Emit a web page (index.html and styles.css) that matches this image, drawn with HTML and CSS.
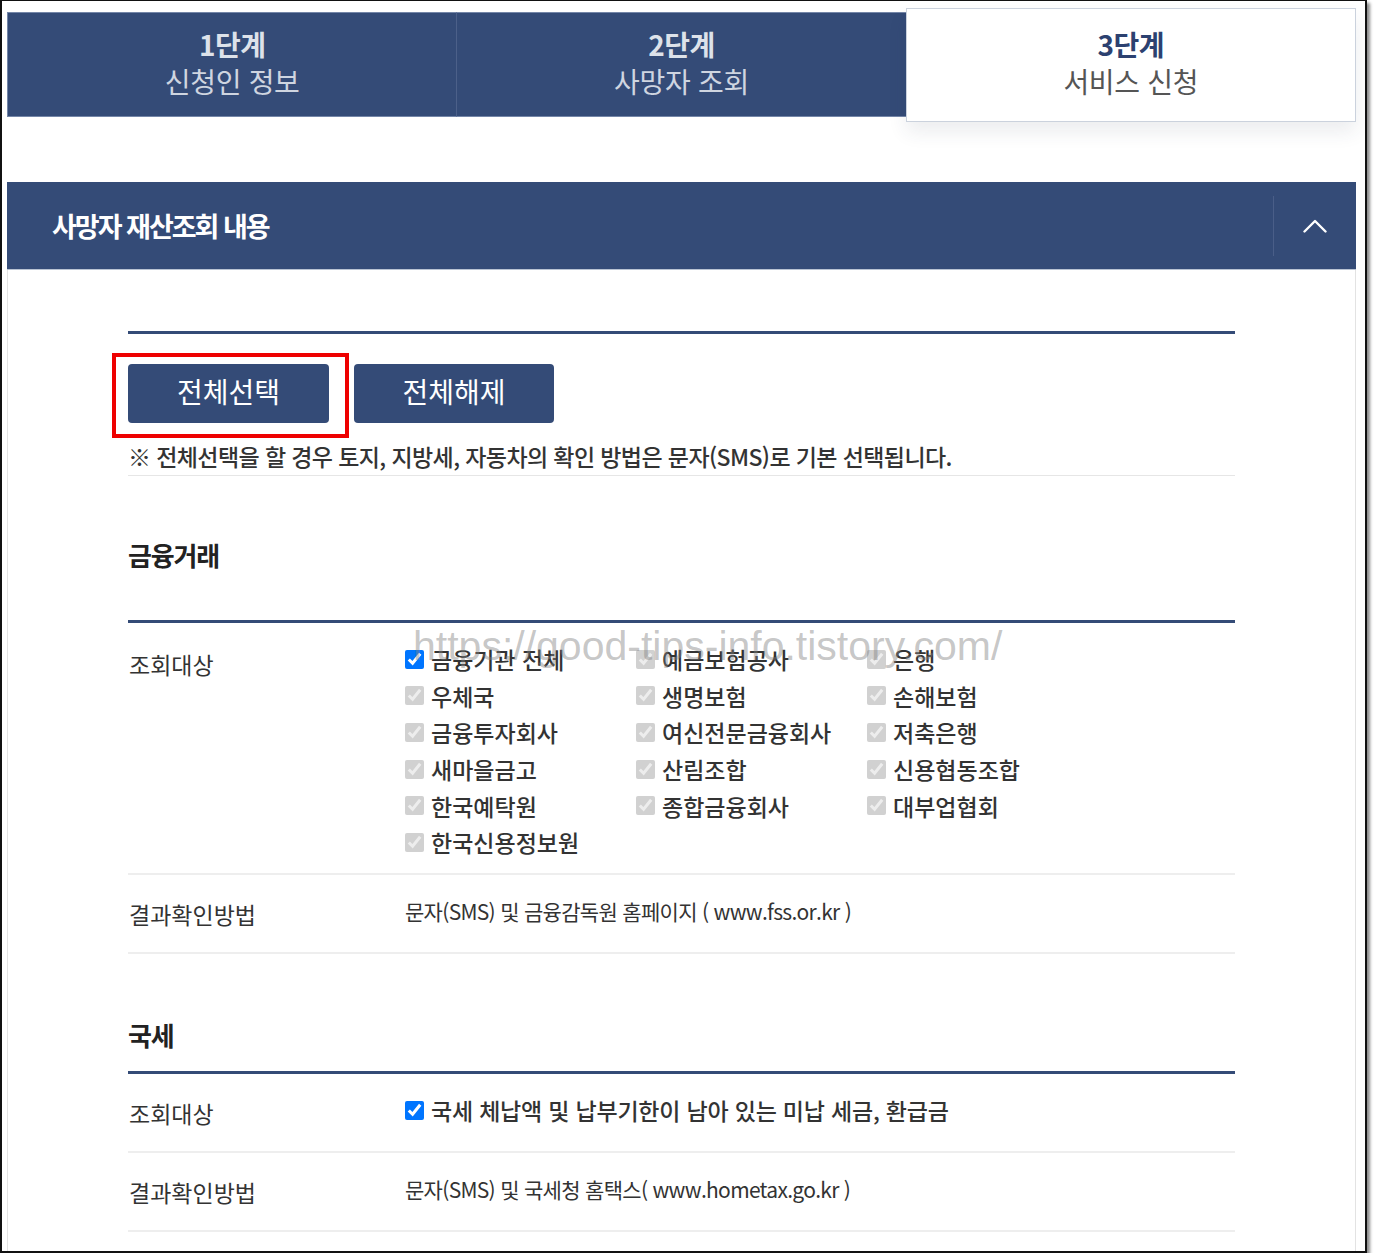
FILE: index.html
```html
<!DOCTYPE html>
<html lang="ko">
<head>
<meta charset="utf-8">
<title>서비스 신청</title>
<link rel="stylesheet" href="styles.css">
</head>
<body>
<div class="frame">
  <div class="tabs">
    <div class="tab"><span class="step">1단계</span><span class="name">신청인 정보</span></div>
    <div class="tab"><span class="step">2단계</span><span class="name">사망자 조회</span></div>
    <div class="tab active"><span class="step">3단계</span><span class="name">서비스 신청</span></div>
  </div>

  <section class="panel">
    <div class="panel-head">
      <h2>사망자 재산조회 내용</h2>
      <button class="toggle" type="button" aria-label="접기">
        <svg width="24" height="14" viewBox="0 0 24 14"><polyline points="1.5,12.5 12,2 22.5,12.5" fill="none" stroke="#fff" stroke-width="2.4" stroke-linecap="round" stroke-linejoin="round"/></svg>
      </button>
    </div>
    <div class="panel-body">
      <div class="inner">
        <div class="btns">
          <button class="btn btn-first" type="button">전체선택</button>
          <button class="btn btn-second" type="button">전체해제</button>
          <span class="highlight"></span>
        </div>
        <p class="note">※ 전체선택을 할 경우 토지, 지방세, 자동차의 확인 방법은 문자(SMS)로 기본 선택됩니다.</p>

        <h3 class="sec-title">금융거래</h3>
        <div class="table">
          <div class="row row-big">
            <div class="label label-big">조회대상</div>
            <div class="checks">
              <label class="chk"><input type="checkbox" checked><span>금융기관 전체</span></label>
              <label class="chk"><input type="checkbox" checked disabled><span>예금보험공사</span></label>
              <label class="chk"><input type="checkbox" checked disabled><span>은행</span></label>
              <label class="chk"><input type="checkbox" checked disabled><span>우체국</span></label>
              <label class="chk"><input type="checkbox" checked disabled><span>생명보험</span></label>
              <label class="chk"><input type="checkbox" checked disabled><span>손해보험</span></label>
              <label class="chk"><input type="checkbox" checked disabled><span>금융투자회사</span></label>
              <label class="chk"><input type="checkbox" checked disabled><span>여신전문금융회사</span></label>
              <label class="chk"><input type="checkbox" checked disabled><span>저축은행</span></label>
              <label class="chk"><input type="checkbox" checked disabled><span>새마을금고</span></label>
              <label class="chk"><input type="checkbox" checked disabled><span>산림조합</span></label>
              <label class="chk"><input type="checkbox" checked disabled><span>신용협동조합</span></label>
              <label class="chk"><input type="checkbox" checked disabled><span>한국예탁원</span></label>
              <label class="chk"><input type="checkbox" checked disabled><span>종합금융회사</span></label>
              <label class="chk"><input type="checkbox" checked disabled><span>대부업협회</span></label>
              <label class="chk"><input type="checkbox" checked disabled><span>한국신용정보원</span></label>
            </div>
          </div>
          <div class="row">
            <div class="label">결과확인방법</div>
            <div class="val">문자(SMS) 및 금융감독원 홈페이지 ( www.fss.or.kr )</div>
          </div>
        </div>

        <h3 class="sec-title sec-tax">국세</h3>
        <div class="table">
          <div class="row">
            <div class="label">조회대상</div>
            <div class="single"><label class="chk"><input type="checkbox" checked><span>국세 체납액 및 납부기한이 남아 있는 미납 세금, 환급금</span></label></div>
          </div>
          <div class="row">
            <div class="label">결과확인방법</div>
            <div class="val">문자(SMS) 및 국세청 홈택스( www.hometax.go.kr )</div>
          </div>
        </div>
      </div>
    </div>
  </section>

  <div class="watermark">https://good-tips-info.tistory.com/</div>
</div>
</body>
</html>
```

FILE: styles.css
```css
* { box-sizing: border-box; }

body {
  margin: 0;
  background: #fff;
  font-family: "Noto Sans CJK KR", "Noto Sans", sans-serif;
  color: #333;
}

.frame {
  position: relative;
  width: 1367px;
  height: 1253px;
  border: 2px solid #111;
  border-top-width: 1px;
  box-shadow: 3px 3px 3px rgba(0, 0, 0, 0.45);
  padding: 11px 9px 0 5px;
  overflow: hidden;
}

/* ---------- step tabs ---------- */
.tabs {
  display: flex;
  height: 105px;
}

.tab {
  flex: 1;
  display: flex;
  flex-direction: column;
  align-items: center;
  justify-content: center;
  padding-bottom: 4px;
  background: #344b77;
  color: #cfd5e0;
  border-top: 1px solid #7486a8;
  border-bottom: 1px solid #7486a8;
}

.tab:first-child { border-left: 1px solid #7486a8; }
.tab + .tab { border-left: 1px solid #4c6089; }

.tab .step {
  font-size: 28px;
  font-weight: 700;
  line-height: 37px;
  letter-spacing: -0.5px;
  color: #dde2ea;
}

.tab .name {
  font-size: 28px;
  line-height: 37px;
  letter-spacing: -0.3px;
}

.tab.active {
  background: #fff;
  color: #555;
  border: 1px solid #cbd2dd;
  margin: -4px 0 -5px;
  box-shadow: 0 10px 18px rgba(40, 50, 80, 0.09);
}

.tab.active .step { color: #2c4170; }

/* ---------- panel ---------- */
.panel { margin-top: 65px; }

.panel-head {
  display: flex;
  align-items: center;
  height: 88px;
  background: #344b77;
  padding-left: 45px;
  border-bottom: 1px solid #b9c3d3;
}

.panel-head h2 {
  flex: 1;
  margin: 0;
  color: #fff;
  font-size: 27px;
  font-weight: 700;
  letter-spacing: -2px;
}

.toggle {
  width: 83px;
  height: 60px;
  padding: 0;
  border: 0;
  border-left: 1px solid #4a5e88;
  background: transparent;
  display: flex;
  align-items: center;
  justify-content: center;
}

.panel-body {
  border-left: 1px solid #e3e3e3;
  border-right: 1px solid #e3e3e3;
  padding: 61px 0 40px 120px;
}

.inner {
  width: 1107px;
  border-top: 3px solid #344b77;
}

/* ---------- buttons ---------- */
.btns {
  position: relative;
  display: flex;
  gap: 25px;
  margin-top: 30px;
}

.btn {
  height: 59px;
  border: 0;
  border-radius: 4px;
  background: #344b77;
  color: #fff;
  font-family: inherit;
  font-size: 28px;
  padding: 0 0 6px;
}

.btn-first { width: 201px; }
.btn-second { width: 200px; }

.highlight {
  position: absolute;
  left: -16px;
  top: -11px;
  width: 237px;
  height: 85px;
  border: 4px solid #ee0000;
}

.note {
  margin: 20px 0 0;
  padding-bottom: 6px;
  font-size: 23px;
  line-height: 26px;
  font-weight: 500;
  letter-spacing: -0.6px;
  color: #333;
  border-bottom: 1px solid #e6e6e6;
}

/* ---------- sections ---------- */
.sec-title {
  margin: 64px 0 50px;
  font-size: 26px;
  line-height: 30px;
  font-weight: 700;
  letter-spacing: -1.2px;
  color: #222;
}

.sec-title.sec-tax { margin: 66px 0 21px; }

.table { border-top: 3px solid #344b77; }

.row {
  display: grid;
  grid-template-columns: 277px 1fr;
  align-items: center;
  height: 79px;
  border-bottom: 2px solid #eeeeee;
}

.row.row-big {
  height: auto;
  align-items: start;
  padding: 18px 0 12px;
}

.label {
  padding-left: 1px;
  font-size: 23px;
  line-height: 30px;
  color: #333;
  margin-top: 2px;
}

.label.label-big { margin-top: 8px; }

.val {
  font-size: 21px;
  line-height: 30px;
  letter-spacing: -0.7px;
  color: #333;
  margin-top: -4px;
}

.checks {
  display: grid;
  grid-template-columns: repeat(3, 231px);
  grid-auto-rows: 36.6px;
}

.chk {
  display: flex;
  align-items: center;
  gap: 7px;
  font-size: 23px;
  line-height: 30px;
  font-weight: 500;
  color: #333;
}

.chk input {
  width: 19px;
  height: 19px;
  margin: 0;
  flex: none;
}

.single .chk { height: 30px; margin-top: -4px; letter-spacing: -0.2px; }

/* ---------- watermark ---------- */
.watermark {
  position: absolute;
  left: 411px;
  top: 625px;
  font-family: "Liberation Sans", Arial, sans-serif;
  font-size: 41px;
  line-height: 41px;
  color: rgba(130, 130, 130, 0.45);
  white-space: nowrap;
  pointer-events: none;
}
```
